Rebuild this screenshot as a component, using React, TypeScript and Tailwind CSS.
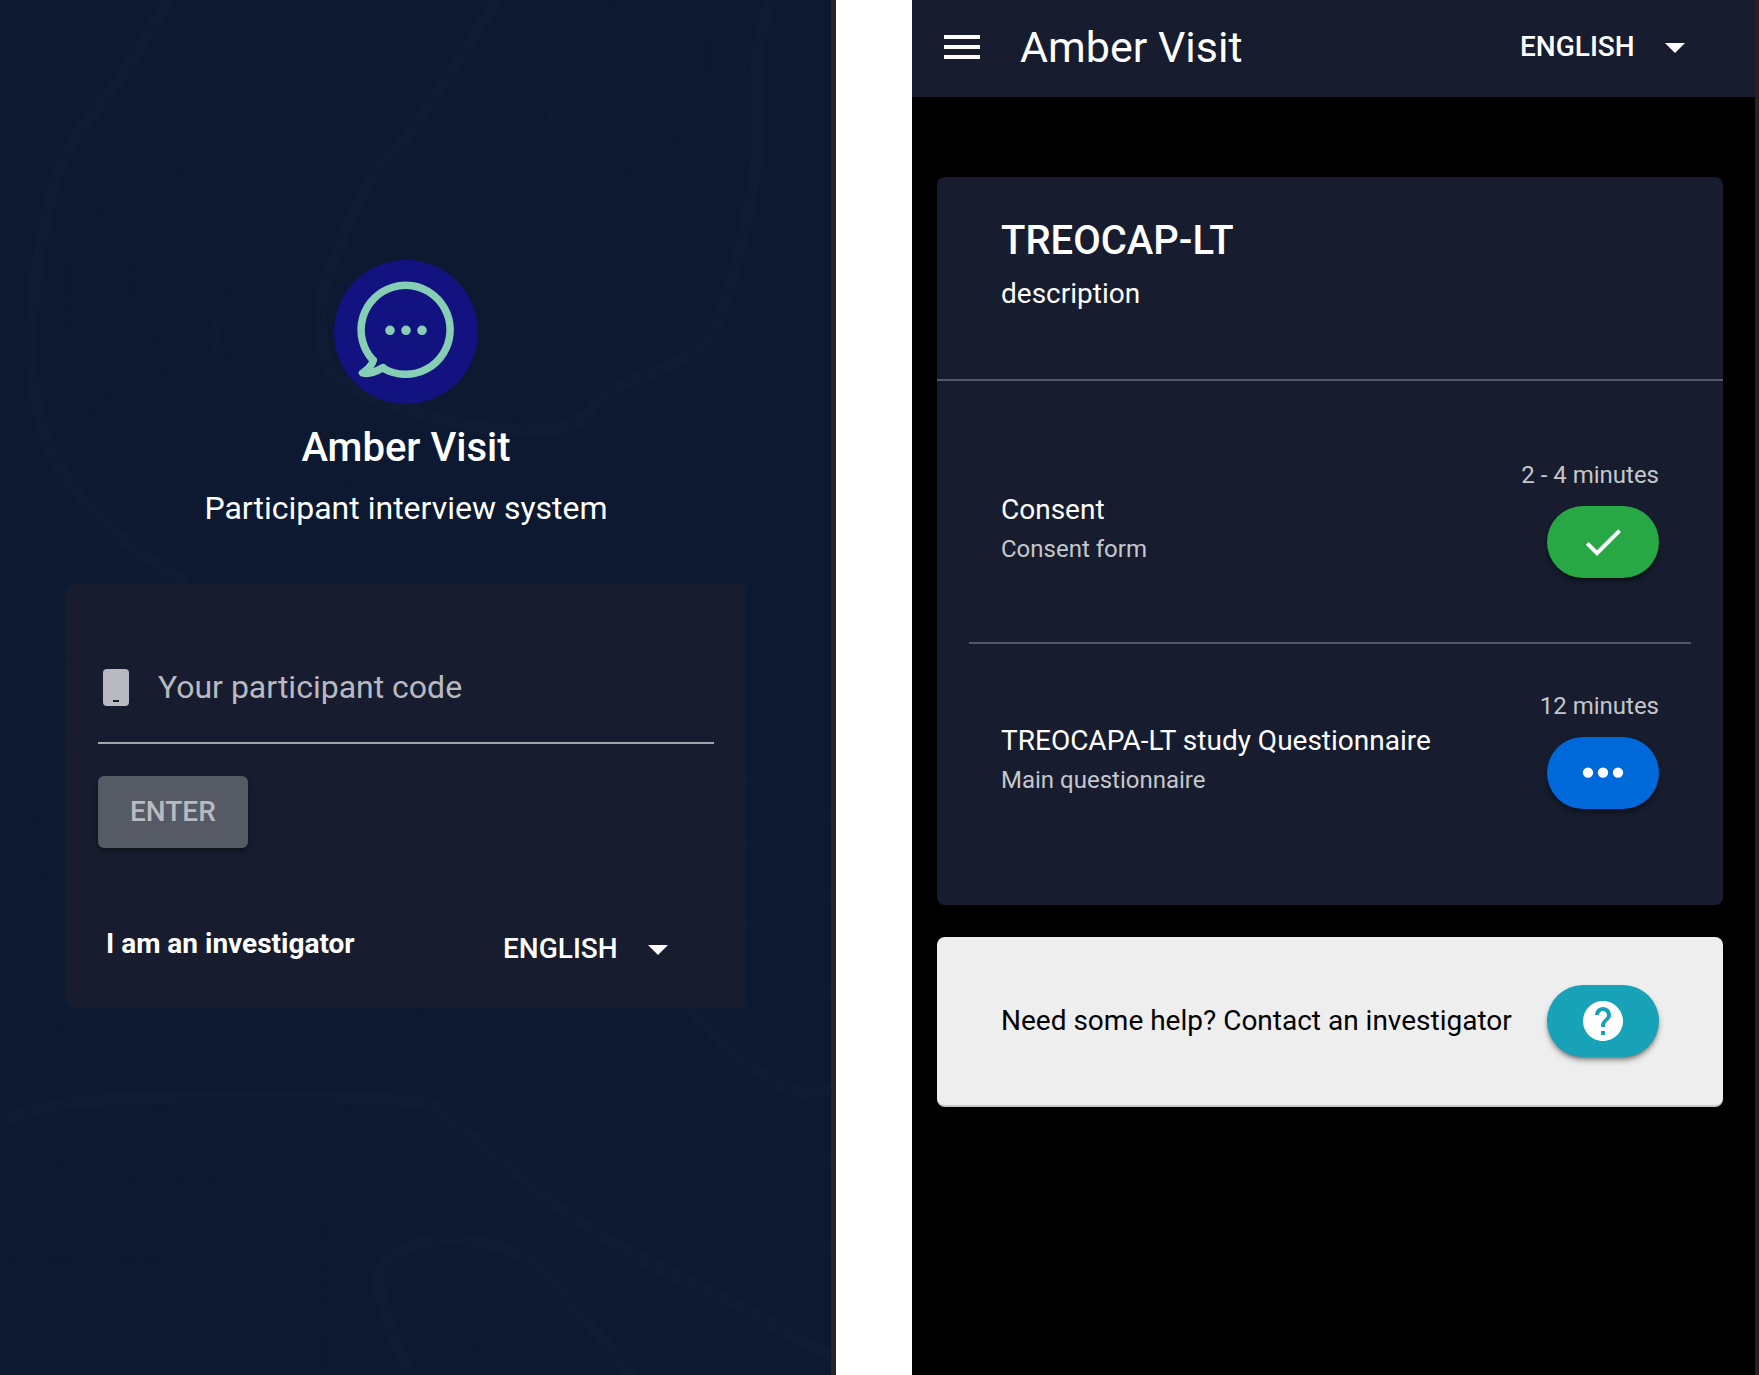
import React from "react";

type Point = [number, number];

/** Smooth curve running through every point. */
function curve(points: Point[], closed = false): string {
  const n = points.length;
  const at = (i: number): Point =>
    closed ? points[(i + n) % n] : points[Math.min(Math.max(i, 0), n - 1)];
  let d = `M${points[0][0]} ${points[0][1]}`;
  for (let i = 0; i < (closed ? n : n - 1); i++) {
    const [a, b, c, e] = [at(i - 1), at(i), at(i + 1), at(i + 2)];
    d += `C${b[0] + (c[0] - a[0]) / 6} ${b[1] + (c[1] - a[1]) / 6} ${c[0] - (e[0] - b[0]) / 6} ${c[1] - (e[1] - b[1]) / 6} ${c[0]} ${c[1]}`;
  }
  return closed ? d + "Z" : d;
}

/** Main contour lines. */
const contours: Point[][] = [
  [[503, -10], [450, 73], [406, 138], [373, 176], [346, 230], [326, 283], [321, 325], [335, 375], [406, 409], [494, 429], [570, 425], [614, 390], [702, 344], [735, 268], [757, 153], [757, 57], [773, -10]],
  [[175, -10], [121, 77], [66, 153], [44, 230], [33, 306], [33, 383], [55, 459], [110, 528], [186, 584]],
  [[-10, 1124], [103, 1100], [396, 1100], [459, 1127], [540, 1193], [631, 1253], [746, 1310], [840, 1362]],
  [[413, 1385], [385, 1310], [382, 1267], [436, 1240], [517, 1253], [574, 1307], [640, 1385]],
  [[680, 1000], [740, 1057], [792, 1090], [840, 1090]],
];

/** Contour lines that are fainter than the main ones. */
const faintContours: Point[][] = [
  [[220, -10], [140, 100], [93, 199], [77, 306], [99, 402], [126, 459], [181, 517], [280, 584]],
  [[300, -10], [190, 130], [150, 230], [142, 310], [165, 400], [230, 480], [330, 540], [420, 584]],
  [[390, -10], [310, 95], [230, 230], [219, 291], [219, 364], [258, 432], [329, 486], [428, 524], [538, 584]],
  [[95, -10], [71, 38], [44, 107], [11, 184], [-10, 240]],
  [[-10, 1038], [69, 1017], [344, 1013], [436, 1027], [505, 1057], [597, 1133], [689, 1200], [775, 1233], [840, 1250]],
  [[-10, 1197], [69, 1173], [276, 1173], [321, 1193], [333, 1227], [333, 1385]],
  [[-10, 1270], [149, 1270], [220, 1283], [228, 1320], [189, 1385]],
  [[485, 1385], [488, 1345], [520, 1350], [550, 1385]],
  [[575, 1000], [637, 1067], [746, 1133], [840, 1166]],
  [[740, 780], [785, 800], [840, 825]],
  [[740, 838], [790, 868], [840, 905]],
  [[740, 915], [787, 960], [840, 1004]],
  [[-10, 640], [30, 650], [80, 680]],
  [[-10, 715], [30, 722], [80, 745]],
  [[-10, 800], [30, 808], [80, 820]],
  [[-10, 872], [30, 885], [80, 888]],
];

const summit: Point[] = [[554, 100], [581, 35], [642, 8], [693, 32], [695, 84], [668, 134], [666, 168], [631, 182], [576, 180], [557, 150]];

function ContourBackdrop() {
  return (
    <svg
      aria-hidden="true"
      className="pointer-events-none absolute inset-0 size-full"
      viewBox="0 0 831 1375"
      preserveAspectRatio="xMidYMid slice"
      fill="none"
      strokeWidth="13"
    >
      <g stroke="#0e1932">
        {faintContours.map((points, i) => (
          <path key={i} d={curve(points)} />
        ))}
        <path d={curve(summit, true)} />
      </g>
      <g stroke="#0f1a33">
        {contours.map((points, i) => (
          <path key={i} d={curve(points)} />
        ))}
      </g>
    </svg>
  );
}

function Logo() {
  return (
    <svg className="size-36" viewBox="0 0 144 144" role="img" aria-label="Amber Visit logo">
      <circle cx="72" cy="72" r="72" fill="#121281" />
      <path
        d="M50.5 109A44.5 44.5 0 1 0 38 99L39.500 100C38 105 33 110 28.500 113C36 115 43 111 49 107.500Z"
        fill="none"
        stroke="#86ceb4"
        strokeWidth="7.500"
        strokeLinejoin="round"
      />
      <g fill="#86ceb4">
        <circle cx="56" cy="70.300" r="4.800" />
        <circle cx="72" cy="70.300" r="4.800" />
        <circle cx="88" cy="70.300" r="4.800" />
      </g>
    </svg>
  );
}

function Icon({ path, className }: { path: string; className: string }) {
  return (
    <svg aria-hidden="true" viewBox="0 0 24 24" fill="currentColor" className={className}>
      <path d={path} />
    </svg>
  );
}

const icons = {
  menu: "M3 18h18v-2H3v2zm0-5h18v-2H3v2zm0-7v2h18V6H3z",
  arrow: "M7 10l5 5 5-5z",
  check: "M9 16.170L4.830 12l-1.420 1.410L9 19 21 7l-1.410-1.410z",
  dots: "M4.500 9.200a2.600 2.600 0 1 0 0 5.200 2.600 2.600 0 0 0 0-5.200zm7.500 0a2.600 2.600 0 1 0 0 5.200 2.600 2.600 0 0 0 0-5.200zm7.500 0a2.600 2.600 0 1 0 0 5.200 2.600 2.600 0 0 0 0-5.200z",
  help: "M12 2C6.480 2 2 6.480 2 12s4.480 10 10 10 10-4.480 10-10S17.520 2 12 2zm1 17h-2v-2h2v2zm2.070-7.750l-.9.920C13.450 12.900 13 13.500 13 15h-2v-.5c0-1.100.450-2.100 1.170-2.830l1.240-1.260c.370-.360.590-.860.590-1.410 0-1.100-.9-2-2-2s-2 .9-2 2H8c0-2.210 1.790-4 4-4s4 1.790 4 4c0 .880-.360 1.680-.930 2.250z",
};

function LanguageSelect({ id }: { id: string }) {
  return (
    <div className="relative flex items-center">
      <select
        id={id}
        aria-label="Language"
        className="h-[70px] w-[179px] cursor-pointer appearance-none bg-transparent text-[28px] font-medium text-white"
      >
        <option>ENGLISH</option>
      </select>
      <Icon path={icons.arrow} className="pointer-events-none absolute right-0 size-12" />
    </div>
  );
}

function LoginPanel() {
  return (
    <section className="relative border-r-[5px] border-[#242528] bg-[#0d1831] pt-[260px] pr-[85px] pb-16 pl-[66px] text-white">
      <ContourBackdrop />
      <div className="relative flex flex-col items-center">
        <Logo />
        <h1 className="mt-3 text-[40px] leading-[64px] font-medium">Amber Visit</h1>
        <p className="text-[32px] leading-[56px]">Participant interview system</p>
        <form
          className="mt-12 w-full rounded-lg bg-[#171d2f] px-8 pt-12 pb-6"
          onSubmit={(event) => event.preventDefault()}
        >
          <div className="flex h-28 items-center border-b-2 border-[#a3a5ac] pl-[5px]">
            <svg aria-hidden="true" viewBox="0 0 26 37" className="h-[37px] w-[26px] shrink-0">
              <rect width="26" height="37" rx="4" fill="#b9bac1" />
              <rect x="10" y="31" width="6" height="2" fill="#171d2f" />
            </svg>
            <input
              id="participant-code"
              type="text"
              aria-label="Your participant code"
              placeholder="Your participant code"
              className="ml-[29px] h-full w-full min-w-0 bg-transparent text-[32px] text-white outline-none placeholder:text-[#b9bac1]"
            />
          </div>
          <button
            type="submit"
            disabled
            className="mt-8 h-[72px] rounded-md bg-[#555a65] px-8 text-[28px] font-medium text-[#b9bac1] shadow-md shadow-black/30"
          >
            ENTER
          </button>
          <div className="mt-[66px] flex items-start justify-between pr-8 pl-2">
            <a href="#investigator" className="text-[28px] leading-[60px] font-bold">
              I am an investigator
            </a>
            <LanguageSelect id="login-language" />
          </div>
        </form>
      </div>
    </section>
  );
}

interface StepProps {
  title: string;
  subtitle: string;
  duration: string;
  icon: string;
  label: string;
  tone: string;
  spacing: string;
}

const pill = "flex h-[72px] w-28 shrink-0 items-center justify-center rounded-[36px] text-white shadow-md shadow-black/40";

function Step({ title, subtitle, duration, icon, label, tone, spacing }: StepProps) {
  return (
    <li className={`flex items-end justify-between px-8 ${spacing}`}>
      <div className="pb-[10px]">
        <h3 className="text-[28px] leading-10">{title}</h3>
        <p className="text-[24px] leading-[38px] text-[#c5c7cb]">{subtitle}</p>
      </div>
      <div className="flex flex-col items-end gap-[11px]">
        <span className="text-[24px] leading-10 text-[#c5c7cb]">{duration}</span>
        <button type="button" aria-label={label} className={`${pill} ${tone}`}>
          <Icon path={icon} className="size-12" />
        </button>
      </div>
    </li>
  );
}

function StudyPanel() {
  return (
    <section className="border-r-4 border-[#232326] bg-black text-white">
      <header className="flex items-center bg-[#171d2f] pt-3 pr-14 pb-[15px] pl-[26px]">
        <button type="button" aria-label="Open menu">
          <Icon path={icons.menu} className="size-12" />
        </button>
        <h1 className="ml-[34px] flex-1 text-[43px] leading-[70px]">Amber Visit</h1>
        <LanguageSelect id="study-language" />
      </header>
      <main className="flex flex-col gap-8 pt-20 pr-8 pb-16 pl-[25px]">
        <article className="rounded-lg bg-[#171d2f]">
          <div className="border-b-2 border-[#555965] px-16 pt-8 pb-16">
            <h2 className="text-[40px] leading-[64px] font-medium">TREOCAP-LT</h2>
            <p className="text-[28px] leading-[42px]">description</p>
          </div>
          <ul className="px-8">
            <Step
              title="Consent"
              subtitle="Consent form"
              duration="2 - 4 minutes"
              icon={icons.check}
              label="Consent completed"
              tone="bg-[#28a745]"
              spacing="border-b-2 border-[#555965] pt-[74px] pb-16"
            />
            <Step
              title="TREOCAPA-LT study Questionnaire"
              subtitle="Main questionnaire"
              duration="12 minutes"
              icon={icons.dots}
              label="Continue questionnaire"
              tone="bg-[#0069d9]"
              spacing="pt-[42px] pb-24"
            />
          </ul>
        </article>
        <aside className="flex items-center justify-between rounded-lg border-b-2 border-[#c8c8c8] bg-[#eeeeee] px-16 py-12">
          <p className="text-[28px] leading-10 text-black">Need some help? Contact an investigator</p>
          <button type="button" aria-label="Contact an investigator" className={`${pill} bg-[#17a2b8]`}>
            <Icon path={icons.help} className="size-12" />
          </button>
        </aside>
      </main>
    </section>
  );
}

export default function App() {
  return (
    <div className="grid min-h-screen grid-cols-[836fr_847fr] gap-[76px] bg-white font-['Roboto',sans-serif]">
      <LoginPanel />
      <StudyPanel />
    </div>
  );
}
